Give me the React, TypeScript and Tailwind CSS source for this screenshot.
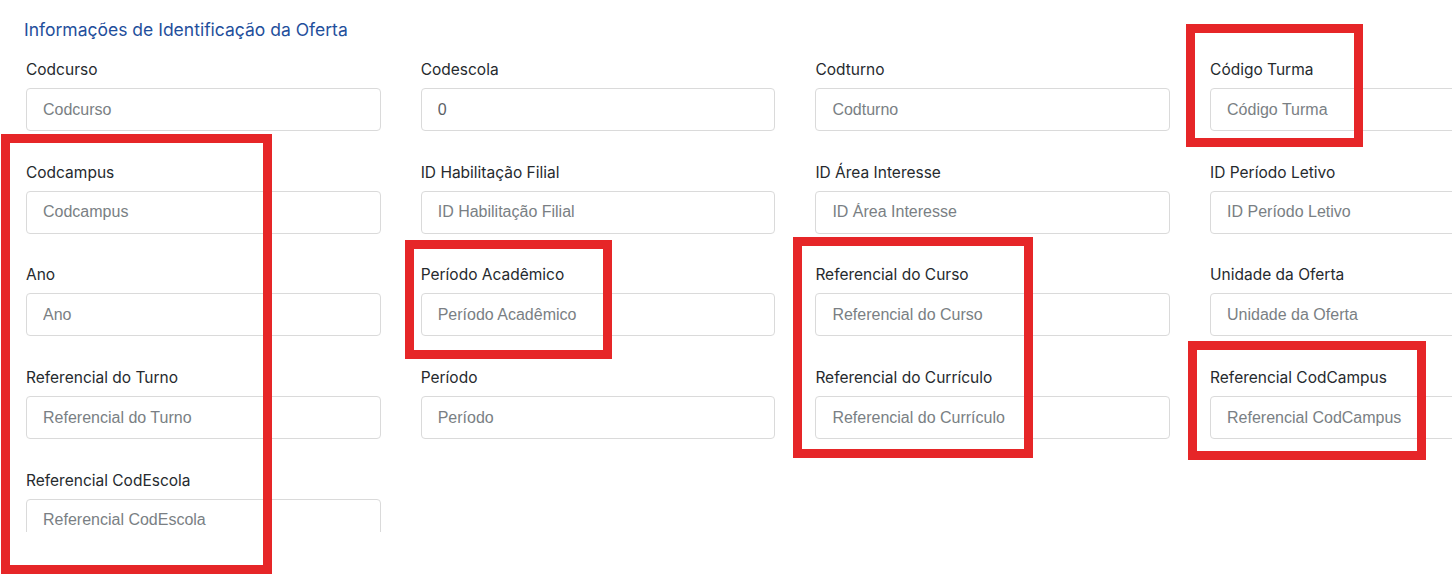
import React from 'react';

type Field = { label: string; value?: string };

const rows: Field[][] = [
  [{ label: 'Codcurso' }, { label: 'Codescola', value: '0' }, { label: 'Codturno' }, { label: 'Código Turma' }],
  [{ label: 'Codcampus' }, { label: 'ID Habilitação Filial' }, { label: 'ID Área Interesse' }, { label: 'ID Período Letivo' }],
  [{ label: 'Ano' }, { label: 'Período Acadêmico' }, { label: 'Referencial do Curso' }, { label: 'Unidade da Oferta' }],
  [{ label: 'Referencial do Turno' }, { label: 'Período' }, { label: 'Referencial do Currículo' }, { label: 'Referencial CodCampus' }],
  [{ label: 'Referencial CodEscola' }],
];

const FormField: React.FC<{ field: Field }> = ({ field }) => (
  <div className="flex flex-col">
    <label className="mb-2 text-[15.5px] leading-5 text-[#262a2e] font-['Inter',sans-serif]">{field.label}</label>
    <input
      readOnly
      defaultValue={field.value}
      placeholder={field.label}
      className="h-[43px] w-full rounded-[4px] border border-[#dadada] bg-white px-4 text-[16px] text-[#5c6166] placeholder:text-[#7a7f84] font-['Liberation_Sans',Arial,sans-serif] outline-none"
    />
  </div>
);

export default function App() {
  return (
    <div className="relative h-[575px] w-[1452px] overflow-hidden bg-white">
      <h2 className="pl-6 pt-5 text-[17.5px] leading-5 text-[#1f4f9c] font-['Inter',sans-serif]">
        Informações de Identificação da Oferta
      </h2>
      <div className="mt-5 h-[472px] overflow-hidden pl-[26px]">
        <div className="grid w-[1540px] grid-cols-[repeat(4,354.7px)] gap-x-10 gap-y-[31.7px]">
          {rows.flat().map((f) => (
            <FormField key={f.label} field={f} />
          ))}
        </div>
      </div>

      {/* red highlight boxes drawn over the form */}
      <div className="pointer-events-none absolute left-[1px] top-[134px] h-[440px] w-[271px] border-[9px] border-[#e62628]" />
      <div className="pointer-events-none absolute left-[405px] top-[240px] h-[119px] w-[207px] border-[9px] border-[#e62628]" />
      <div className="pointer-events-none absolute left-[793px] top-[237px] h-[221px] w-[240px] border-[9px] border-[#e62628]" />
      <div className="pointer-events-none absolute left-[1186px] top-[24px] h-[123px] w-[177px] border-[9px] border-[#e62628]" />
      <div className="pointer-events-none absolute left-[1188px] top-[341px] h-[119px] w-[238px] border-[9px] border-[#e62628]" />
    </div>
  );
}
